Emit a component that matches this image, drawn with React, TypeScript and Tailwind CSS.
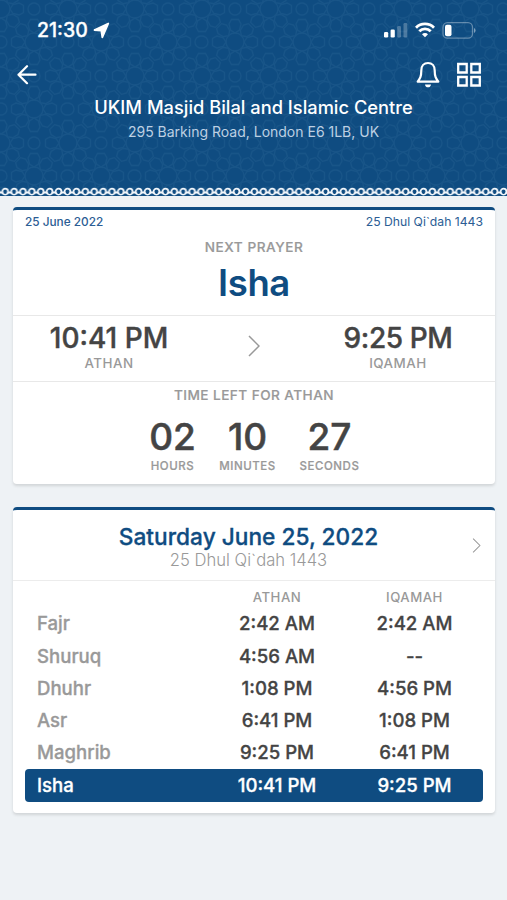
import type { ReactNode } from "react";

interface Prayer {
  name: string;
  athan: string;
  iqamah: string;
}

const prayers: Prayer[] = [
  { name: "Fajr", athan: "2:42 AM", iqamah: "2:42 AM" },
  { name: "Shuruq", athan: "4:56 AM", iqamah: "--" },
  { name: "Dhuhr", athan: "1:08 PM", iqamah: "4:56 PM" },
  { name: "Asr", athan: "6:41 PM", iqamah: "1:08 PM" },
  { name: "Maghrib", athan: "9:25 PM", iqamah: "6:41 PM" },
  { name: "Isha", athan: "10:41 PM", iqamah: "9:25 PM" },
];

const countdown = [
  { value: "02", label: "HOURS", className: "w-[46px]" },
  { value: "10", label: "MINUTES", className: "w-[56px]" },
  { value: "27", label: "SECONDS", className: "w-[60px]" },
];

// centres of the big rosettes inside one 67px tile, repeated on its edges
const rosettes = [
  [1, 9],
  [68, 9],
  [1, 76],
  [68, 76],
  [34, 42],
];

function GirihPattern() {
  return (
    <svg className="absolute inset-0 h-full w-full" aria-hidden="true">
      <defs>
        <pattern id="girih" width="67" height="67" patternUnits="userSpaceOnUse">
          <g fill="none" stroke="#2a6595" strokeWidth="1.3" opacity="0.32">
            {rosettes.map(([cx, cy]) => (
              <g key={`${cx}-${cy}`} transform={`translate(${cx} ${cy})`}>
                <circle r="9" />
                {[0, 45, 90, 135, 180, 225, 270, 315].map((angle) => (
                  <path
                    key={angle}
                    transform={`rotate(${angle})`}
                    d="M9 0 12-4.5 18-6 22.5-3.5V3.5L18 6 12 4.5z"
                  />
                ))}
              </g>
            ))}
            <circle cx="34" cy="9" r="6" />
            <circle cx="1" cy="42" r="6" />
            <circle cx="67" cy="42" r="6" />
          </g>
        </pattern>
      </defs>
      <rect width="100%" height="100%" fill="url(#girih)" />
    </svg>
  );
}

function LaceBorder() {
  return (
    <svg className="absolute inset-x-0 bottom-0 h-[9px] w-full" aria-hidden="true">
      <defs>
        <pattern id="lace" width="8.9" height="9" x="0.7" patternUnits="userSpaceOnUse">
          <path d="M-1 5.5h3M6.9 5.5h3" stroke="#f3f7fb" strokeWidth="1.8" />
          <circle cx="4.45" cy="4.6" r="2.9" fill="#0f4c81" stroke="#f3f7fb" strokeWidth="1.8" />
          <rect x="3.5" y="5.5" width="1.9" height="1.5" fill="#0f4c81" />
        </pattern>
      </defs>
      <rect width="100%" height="9" fill="url(#lace)" />
    </svg>
  );
}

function StatusBar() {
  return (
    <div className="flex h-[60px] items-center justify-between pr-[31px] pl-[37px]">
      <div className="flex items-center gap-[5px]">
        <span className="pt-px text-[19.5px] font-medium [-webkit-text-stroke:0.3px]">21:30</span>
        <svg width="17" height="17" viewBox="0 0 17 17" fill="currentColor" stroke="currentColor" strokeWidth="1.8" strokeLinejoin="round">
          <path d="M15.3 1.5 1.5 8 8.3 8.7 9.3 15.3z" />
        </svg>
      </div>
      <div className="flex items-center gap-[7px]">
        <svg width="24" height="16" viewBox="0 0 24 16" fill="currentColor">
          <rect x="0" y="10" width="4.2" height="5.5" rx="1.2" />
          <rect x="6.6" y="7.5" width="4.2" height="8" rx="1.2" />
          <rect x="13.2" y="4" width="3.8" height="11.5" rx="1.2" opacity="0.25" />
          <rect x="19.5" y="1" width="3.8" height="14.5" rx="1.2" opacity="0.25" />
        </svg>
        <svg width="20" height="16" viewBox="0 0 20 16" fill="none" stroke="currentColor" strokeWidth="2.8">
          <path d="M1 5.7a12.7 12.7 0 0 1 18 0" />
          <path d="M4.3 9.2a8 8 0 0 1 11.4 0" />
          <path d="m10 15.2-3-3a4.2 4.2 0 0 1 6 0z" fill="currentColor" stroke="none" />
        </svg>
        <svg width="34" height="17" viewBox="0 0 34 17">
          <rect x="1" y=".7" width="29.5" height="15.5" rx="4.5" fill="none" stroke="#fff" strokeOpacity=".35" strokeWidth="1.3" />
          <rect x="3" y="2.7" width="6.5" height="11.5" rx="2" fill="#fff" />
          <path d="M32 6v5q1.6-.8 1.6-2.5T32 6" fill="#fff" opacity=".45" />
        </svg>
      </div>
    </div>
  );
}

function Header() {
  return (
    <header className="relative h-[196px] overflow-hidden bg-[#0f4c81] text-white">
      <GirihPattern />
      <div className="relative">
        <StatusBar />
        <div className="flex h-[30px] items-center justify-between pr-[25px] pl-[17px]">
          <svg width="20" height="20" viewBox="0 0 20 20" fill="none" stroke="currentColor" strokeWidth="2.2" strokeLinecap="round" strokeLinejoin="round">
            <path d="M18.5 9.7H1.5M10 1.2 1.5 9.7l8.5 8.5" />
          </svg>
          <div className="flex items-center gap-[16.5px]">
            <svg width="24" height="28" viewBox="0 0 24 28" fill="none" stroke="currentColor" strokeWidth="2.2" strokeLinejoin="round">
              <path d="M12 2C8 2 5.300 5 5.300 9.400c0 6.300-1.200 8.100-3.600 11.300h20.600c-2.400-3.200-3.600-5-3.600-11.300C18.700 5 16 2 12 2z" />
              <path d="M9 23.500h6c-.4 3.800-5.600 3.800-6 0z" fill="currentColor" stroke="none" />
            </svg>
            <svg width="26" height="26" viewBox="0 0 26 26" fill="none" stroke="currentColor" strokeWidth="2.3">
              <path d="M2.2 2h8.500v8.500H2.200zM15.300 2h8.500v8.500h-8.500zM2.200 15h8.500v8.500H2.200zM15.300 15h8.500v8.500h-8.500z" />
            </svg>
          </div>
        </div>
        <h1 className="mt-[5px] text-center text-[18.3px] leading-6 font-medium whitespace-nowrap">
          UKIM Masjid Bilal and Islamic Centre
        </h1>
        <p className="mt-[3px] text-center text-[14px] leading-5 text-[#bdd0e3]">
          295 Barking Road, London E6 1LB, UK
        </p>
      </div>
      <LaceBorder />
    </header>
  );
}

function Card({ className, children }: { className: string; children: ReactNode }) {
  return (
    <section className={`mr-3 ml-[13px] overflow-hidden rounded-[4px] border-t-[3px] border-[#0f4c81] bg-white shadow-[0_2px_3px_rgba(0,0,0,0.12)] ${className}`}>
      {children}
    </section>
  );
}

function Chevron({ className }: { className: string }) {
  return (
    <svg className={className} viewBox="0 0 12 22" fill="none" stroke="currentColor" strokeWidth="1.5">
      <path d="m1 1 10 10L1 21" />
    </svg>
  );
}

function NextPrayerCard() {
  return (
    <Card className="mt-[11px] h-[277px]">
      <div className="h-[106px] border-b border-[#e8e8e8] px-3 pt-1">
        <div className="flex justify-between text-[12px] leading-[16px] text-[#2b5d94]">
          <span className="text-[11.8px] font-medium">25 June 2022</span>
          <span className="text-[12.2px]">25 Dhul Qi`dah 1443</span>
        </div>
        <div className="mt-[7px] text-center text-[13.6px] leading-5 font-medium tracking-[0.55px] text-[#999] [-webkit-text-stroke:0.2px]">NEXT PRAYER</div>
        <div className="mt-[4px] text-center text-[36.5px] leading-[44px] font-semibold tracking-[-0.4px] text-[#0f4c81]">Isha</div>
      </div>
      <div className="flex h-[66px] items-start justify-between border-b border-[#e8e8e8] pt-[6px] pr-[42px] pl-[36px] text-center">
        <div className="w-[120px]">
          <div className="text-[28px] leading-8 font-medium whitespace-nowrap text-[#444] [-webkit-text-stroke:0.4px]">10:41 PM</div>
          <div className="-mt-px text-[13.4px] leading-5 font-medium tracking-[0.5px] text-[#999]">ATHAN</div>
        </div>
        <Chevron className="mt-[13px] mr-[5px] h-[22px] w-3 text-[#999]" />
        <div className="w-[110px]">
          <div className="text-[28px] leading-8 font-medium tracking-[-0.4px] whitespace-nowrap text-[#444] [-webkit-text-stroke:0.4px]">9:25 PM</div>
          <div className="-mt-px text-[13.4px] leading-5 font-medium tracking-[0.5px] text-[#999]">IQAMAH</div>
        </div>
      </div>
      <div className="pt-[3px] text-center">
        <div className="text-[13.6px] leading-5 font-medium tracking-[0.45px] text-[#999] [-webkit-text-stroke:0.2px]">TIME LEFT FOR ATHAN</div>
        <div className="mt-[11px] ml-px flex justify-center gap-[24px]">
          {countdown.map((item) => (
            <div key={item.label} className={`flex flex-col items-center ${item.className}`}>
              <div className="text-[37px] leading-[42px] font-medium text-[#444] [-webkit-text-stroke:0.5px]">{item.value}</div>
              <div className="text-[11.5px] leading-4 font-medium tracking-[0.55px] text-[#999] [-webkit-text-stroke:0.2px]">{item.label}</div>
            </div>
          ))}
        </div>
      </div>
    </Card>
  );
}

function TimetableCard() {
  return (
    <Card className="mt-[23px] h-[306px]">
      <div className="relative h-[71px] border-b border-[#ececec] pt-[13px] pr-[11px] text-center">
        <h2 className="text-[22.7px] leading-7 font-medium whitespace-nowrap text-[#0f4c81] [-webkit-text-stroke:0.3px]">Saturday June 25, 2022</h2>
        <p className="-mt-px text-[16.6px] leading-5 font-light text-[#999]">25 Dhul Qi`dah 1443</p>
        <Chevron className="absolute top-[28px] right-[14px] h-[15px] w-[9px] text-[#999]" />
      </div>
      <div className="px-3 pt-[6px]">
        <div className="grid grid-cols-[183px_138px_137px] text-center text-[13.2px] leading-5 font-medium tracking-[0.5px] text-[#999]">
          <span className="col-start-2">ATHAN</span>
          <span>IQAMAH</span>
        </div>
        <div className="pt-px">
          {prayers.map((prayer) => {
            const active = prayer.name === "Isha";
            return (
              <div
                key={prayer.name}
                className={`grid h-[32.3px] grid-cols-[183px_138px_137px] items-center rounded-[4px] text-center text-[18.6px] font-medium [-webkit-text-stroke:0.3px] ${
                  active ? "bg-[#0f4c81] text-white" : "text-[#444]"
                }`}
              >
                <span className={`pl-3 text-left ${active ? "" : "text-[#999]"}`}>{prayer.name}</span>
                <span>{prayer.athan}</span>
                <span>{prayer.iqamah}</span>
              </div>
            );
          })}
        </div>
      </div>
    </Card>
  );
}

export default function App() {
  return (
    <main className="h-[900px] w-[507px] overflow-hidden bg-[#eef2f5] font-['Inter',sans-serif]">
      <Header />
      <NextPrayerCard />
      <TimetableCard />
    </main>
  );
}
